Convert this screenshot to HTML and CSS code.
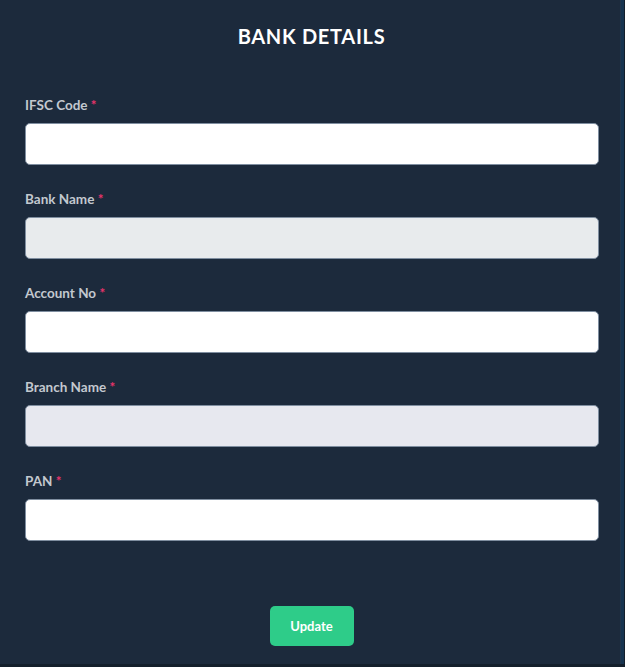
FILE: index.html
```html
<!DOCTYPE html>
<html>
<head>
<meta charset="utf-8">
<link rel="stylesheet" href="styles.css">
</head>
<body>
<div class="card">
  <h2 class="title">BANK DETAILS</h2>
  <form class="form">
    <div class="group">
      <label class="label">IFSC Code <span class="req">*</span></label>
      <input class="input" type="text">
    </div>
    <div class="group">
      <label class="label">Bank Name <span class="req">*</span></label>
      <input class="input input-disabled" type="text" readonly>
    </div>
    <div class="group">
      <label class="label">Account No <span class="req">*</span></label>
      <input class="input" type="text">
    </div>
    <div class="group">
      <label class="label">Branch Name <span class="req">*</span></label>
      <input class="input input-disabled2" type="text" readonly>
    </div>
    <div class="group">
      <label class="label">PAN <span class="req">*</span></label>
      <input class="input" type="text">
    </div>
    <div class="actions">
      <button class="btn" type="button">Update</button>
    </div>
  </form>
</div>
</body>
</html>
```
FILE: styles.css
```css
* { box-sizing: border-box; }
html, body { margin: 0; padding: 0; }
body {
  background: #141f2b;
  width: 625px;
  height: 667px;
  overflow: hidden;
  font-family: "Lato", "Inter", sans-serif;
}
.card {
  width: 621px;
  height: 664px;
  background: #1c2a3c;
  border-right: 1px solid #22354b;
  padding: 22px 22px 0 25px;
  box-shadow: 3px 0 0 #173450;
}
.title {
  margin: 0 0 46px;
  text-align: center;
  color: #ffffff;
  font-size: 20px;
  font-weight: 700;
  line-height: 28px;
  letter-spacing: 0.7px;
}
.form { display: flex; flex-direction: column; }
.group {
  display: flex;
  flex-direction: column;
  margin-bottom: 25px;
}
.label {
  color: #c3c8cf;
  font-size: 13.5px;
  font-weight: 700;
  line-height: 18px;
  margin-bottom: 9px;
}
.req { color: #e8336b; }
.input {
  width: 574px;
  height: 42px;
  border: 1px solid #7f8ea0;
  border-radius: 5px;
  background: #ffffff;
  outline: none;
}
.input-disabled { background: #e8ebed; }
.input-disabled2 { background: #e7e8ef; }
.actions {
  display: flex;
  justify-content: center;
  padding-top: 40px;
}
.btn {
  width: 84px;
  height: 40px;
  border: none;
  border-radius: 5px;
  background: #2ecc89;
  color: #ffffff;
  font-family: "Lato", sans-serif;
  font-size: 13px;
  font-weight: 700;
}
```
